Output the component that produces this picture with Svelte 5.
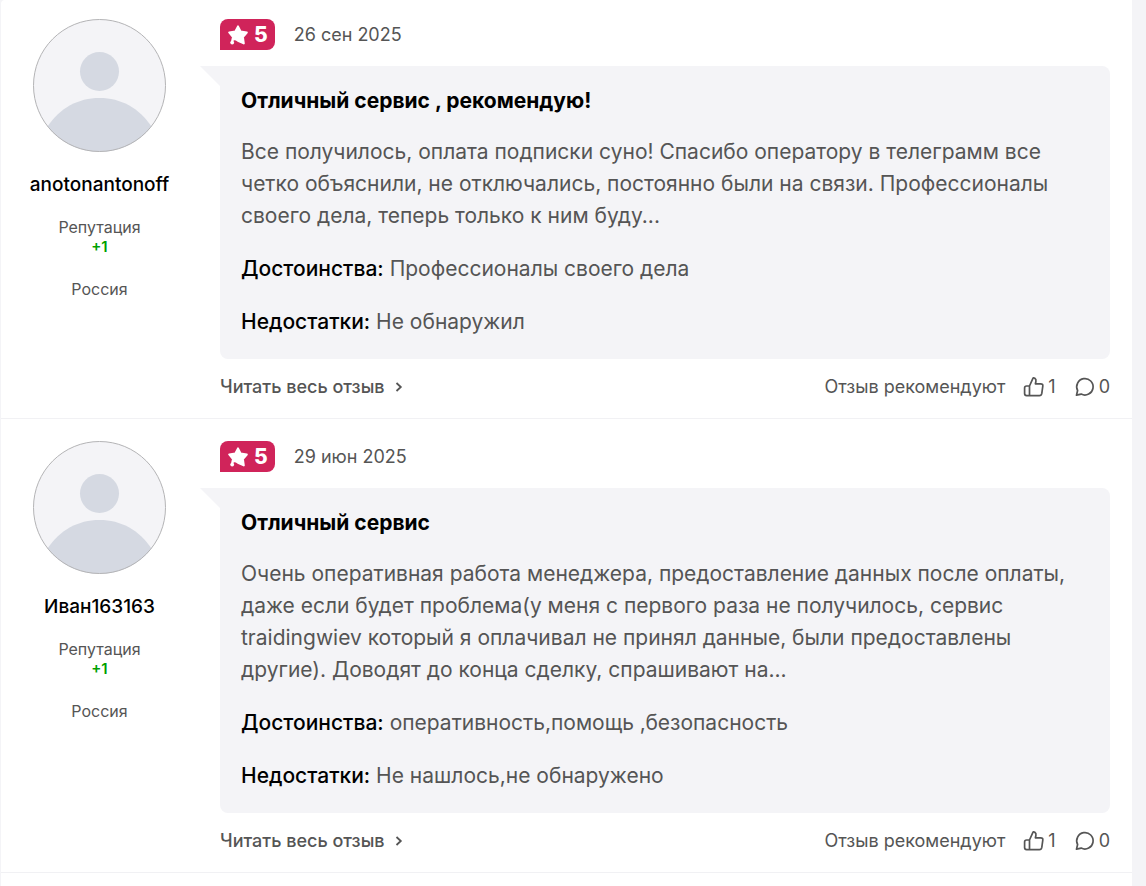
<script>

let reviews = $state([
  {
    author: "anotonantonoff",
    reputation: "+1",
    country: "Россия",
    rating: 5,
    date: "26 сен 2025",
    title: "Отличный сервис , рекомендую!",
    text: "Все получилось, оплата подписки суно! Спасибо оператору в телеграмм все четко объяснили, не отключались, постоянно были на связи. Профессионалы своего дела, теперь только к ним буду...",
    plus: "Профессионалы своего дела",
    minus: "Не обнаружил",
    likes: 1,
    comments: 0
  },
  {
    author: "Иван163163",
    reputation: "+1",
    country: "Россия",
    rating: 5,
    date: "29 июн 2025",
    title: "Отличный сервис",
    text: "Очень оперативная работа менеджера, предоставление данных после оплаты, даже если будет проблема(у меня с первого раза не получилось, сервис traidingwiev который я оплачивал не принял данные, были предоставлены другие). Доводят до конца сделку, спрашивают на...",
    plus: "оперативность,помощь ,безопасность",
    minus: "Не нашлось,не обнаружено",
    likes: 1,
    comments: 0
  }
])

function like(review) {
  review.likes += 1
}

</script>

<main class="panel">
  {#each reviews as review }
    <article class="review">
      <aside class="author">
        <svg class="avatar" viewBox="0 0 133 133" aria-hidden="true">
          <circle cx="66.5" cy="66.5" r="66" fill="#f4f4f7" />
          <circle cx="66.5" cy="52.5" r="19.5" fill="#d5d9e2" />
          <path d="M14.5 107.5C27 89 45 79 66.5 79S106 89 118.5 107.5A66 66 0 0 1 14.5 107.5Z" fill="#d5d9e2" />
          <circle cx="66.5" cy="66.5" r="66" fill="none" stroke="#b4b4b6" stroke-width="1" />
        </svg>
        <a class="name" href="#author">{review.author}</a>
        <div class="reputation">Репутация <b>{review.reputation}</b></div>
        <div class="country">{review.country}</div>
      </aside>

      <div class="content">
        <header>
          <span class="rating">
            <svg viewBox="0 0 20 20" width="20" height="20" aria-hidden="true">
              <path d="M10 1.4L12.6 6.4L18.8 7.6L14.9 12L15.8 18.4L10 15.8Q7.6 13.8 5.2 14.4L3.8 17.4L5 12L1.2 7.4L7.2 6.6Z" fill="#fff" stroke="#fff" stroke-width="2" stroke-linejoin="round" />
              <circle cx="4.2" cy="17.6" r="1.9" fill="#fff" />
            </svg>
            {review.rating}
          </span>
          <time>{review.date}</time>
        </header>

        <div class="bubble">
          <h3>{review.title}</h3>
          <p>{review.text}</p>
          <p><b>Достоинства:</b> {review.plus}</p>
          <p><b>Недостатки:</b> {review.minus}</p>
        </div>

        <footer>
          <a class="more" href="#review">
            Читать весь отзыв
            <svg viewBox="0 0 8 12" width="8" height="12" aria-hidden="true">
              <path d="M1.5 2L5.8 6L1.5 10" fill="none" stroke="currentColor" stroke-width="1.8" />
            </svg>
          </a>
          <span class="recommend">Отзыв рекомендуют</span>
          <button aria-label="Рекомендую" onclick={() => like(review)}>
            <svg viewBox="0 0 22 22" width="22" height="22" aria-hidden="true">
              <path d="M6.5 10L9.8 2.6Q10.4 1.4 11.8 2.3Q13.4 3.4 12.9 5.5L12.4 7.8H17.6Q20.2 7.8 19.8 10.2L18.8 17.4Q18.4 19.6 16.4 19.6H3.6Q1.6 19.6 1.6 17.6V12Q1.6 10 3.6 10ZM6.500 10V19.6" />
            </svg>
            {review.likes}
          </button>
          <button class="comments" aria-label="Комментарии">
            <svg viewBox="0 0 22 22" width="22" height="22" aria-hidden="true">
              <path d="M2.5 19.2L3.6 14.5A8.2 8.2 0 1 1 7.2 18.1Z" />
            </svg>
            {review.comments}
          </button>
        </footer>
      </div>
    </article>
  {/each}
</main>

<style>

  :global(body) {
    background: #f4f4f7;
  }

  .panel {
    min-height: 100vh;
    margin: 0 14px 0 1px;
    border-radius: 4px 0 0 0;
    background: #fff;
    color: #555;
    font-family: Inter, "Noto Sans", sans-serif;
    font-size: 18px;
  }

  .review {
    display: flex;
    padding: 22px 22px 0 0;
    border-bottom: 1px solid #f1f1f4;
  }

  .review:first-child {
    padding-top: 19px;
  }

  .author {
    display: flex;
    flex-direction: column;
    align-items: center;
    flex: none;
    width: 197px;
    margin-right: 22px;
    font-size: 16px;
    line-height: 20px;
    text-align: center;
  }

  .avatar {
    width: 133px;
    height: 133px;
  }

  .name {
    margin-top: 21px;
    color: #000;
    font-size: 19px;
    font-weight: 500;
    line-height: 24px;
    text-decoration: none;
  }

  .reputation {
    margin-top: 20px;
  }

  .reputation b {
    display: block;
    color: #00a000;
    font-size: 15px;
    font-weight: 600;
  }

  .country {
    margin-top: 22px;
  }

  .content {
    flex: 1;
    min-width: 0;
  }

  header {
    display: flex;
    align-items: center;
    gap: 19px;
  }

  .rating {
    display: flex;
    align-items: center;
    gap: 6px;
    box-sizing: border-box;
    height: 31px;
    padding: 0 7px 0 8px;
    border-radius: 8px 8px 8px 0;
    background: #d0245a;
    color: #fff;
    font-size: 21px;
    font-weight: 800;
  }

  .bubble {
    position: relative;
    margin-top: 16px;
    padding: 19px 21px 21px;
    border-radius: 0 8px 8px 8px;
    background: #f4f4f7;
    font-size: 21px;
    line-height: 32px;
  }

  .bubble::before {
    content: "";
    position: absolute;
    top: 0;
    left: -20px;
    border-top: 20px solid #f4f4f7;
    border-left: 20px solid transparent;
  }

  h3 {
    margin: 0 0 19px;
    color: #000;
    font-size: 21px;
    font-weight: 700;
  }

  p {
    margin: 0 0 21px;
  }

  p:last-child {
    margin-bottom: 0;
  }

  p b {
    color: #000;
    font-weight: 500;
  }

  footer {
    display: flex;
    align-items: center;
    padding: 16px 0 19px;
    line-height: 24px;
  }

  .more {
    margin-right: auto;
    color: #555;
    font-weight: 500;
    text-decoration: none;
  }

  .more svg {
    margin-left: 6px;
  }

  .recommend {
    margin-right: 18px;
  }

  button {
    display: flex;
    align-items: center;
    gap: 3px;
    padding: 0;
    border: 0;
    background: none;
    color: inherit;
    font: inherit;
    cursor: pointer;
  }

  button svg {
    fill: none;
    stroke: currentColor;
    stroke-width: 1.7;
    stroke-linejoin: round;
  }

  .comments {
    margin-left: 18px;
  }

</style>
